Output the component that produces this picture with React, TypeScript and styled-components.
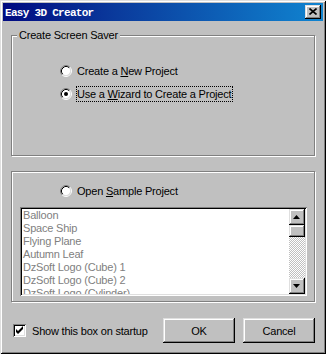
import React from 'react';
import styled, { createGlobalStyle } from 'styled-components';

const Global = createGlobalStyle`
  html, body { margin: 0; padding: 0; background: #c0c0c0; }
  body { font-family: "Liberation Sans", Arial, sans-serif; font-size: 11px; letter-spacing: -0.2px; color: #000; }
  * { box-sizing: border-box; }
`;

const Win = styled.div`
  width: 326px;
  height: 354px;
  background: #c0c0c0;
  padding: 3px;
  display: flex;
  flex-direction: column;
  box-shadow: inset 1px 1px 0 #dfdfdf, inset -1px -1px 0 #000, inset 2px 2px 0 #fff, inset -2px -2px 0 #808080;
`;

const TitleBar = styled.div`
  height: 18px;
  flex: none;
  display: flex;
  align-items: center;
  justify-content: space-between;
  padding: 0 2px 0 2px;
  background: linear-gradient(90deg, #000a80 0%, #0a3a9c 35%, #1084d0 100%);
`;

const Title = styled.span`
  color: #fff;
  font-family: "Liberation Mono", "DejaVu Sans Mono", monospace;
  font-weight: bold;
  font-size: 11px;
  letter-spacing: -0.7px;
  padding-top: 1px;
  white-space: nowrap;
`;

const RaisedBox = styled.div`
  background: #c0c0c0;
  display: flex;
  align-items: center;
  justify-content: center;
  box-shadow: inset -1px -1px 0 #000, inset 1px 1px 0 #dfdfdf, inset -2px -2px 0 #808080, inset 2px 2px 0 #fff;
`;

const CloseBtn = styled(RaisedBox)`
  width: 16px;
  height: 14px;
  padding: 0 1px 1px 0;
`;

const Body = styled.div`
  flex: 1;
  display: flex;
  flex-direction: column;
  padding: 0 8px;
`;

const Group = styled.div<{ $h: number; $mt: number }>`
  position: relative;
  flex: none;
  height: ${p => p.$h}px;
  margin-top: ${p => p.$mt}px;
  border: 1px solid #808080;
  box-shadow: inset 1px 1px 0 #fff, 1px 1px 0 #fff;
  display: flex;
  flex-direction: column;
`;

const GroupLabel = styled.span`
  position: absolute;
  top: -7px;
  left: 5px;
  padding: 0 2px;
  background: #c0c0c0;
  line-height: 13px;
  white-space: nowrap;
`;

const Options = styled.div<{ $pt: number }>`
  display: flex;
  flex-direction: column;
  gap: 7px;
  padding: ${p => p.$pt}px 0 0 48px;
`;

const OptionRow = styled.div`
  display: flex;
  align-items: center;
  height: 16px;
`;

const OptionLabel = styled.span<{ $focused?: boolean }>`
  margin-left: 4px;
  border: 1px dotted ${p => (p.$focused ? '#000' : 'transparent')};
  padding: 0 1px 0 0;
  line-height: 14px;
  white-space: nowrap;
`;

const Key = styled.span`
  text-decoration: underline;
`;

const RadioSvg = styled.svg`
  flex: none;
  display: block;
`;

function Radio({ checked }: { checked?: boolean }) {
  return (
    <RadioSvg width="12" height="12" viewBox="0 0 12 12">
      <circle cx="6" cy="6" r="4.5" fill="#fff" />
      <path d="M2.11 9.89 A5.5 5.5 0 0 1 9.89 2.11" fill="none" stroke="#808080" strokeWidth="1" />
      <path d="M9.89 2.11 A5.5 5.5 0 0 1 2.11 9.89" fill="none" stroke="#fff" strokeWidth="1" />
      <path d="M2.82 9.18 A4.5 4.5 0 0 1 9.18 2.82" fill="none" stroke="#000" strokeWidth="1" />
      <path d="M9.18 2.82 A4.5 4.5 0 0 1 2.82 9.18" fill="none" stroke="#dfdfdf" strokeWidth="1" />
      {checked && <circle cx="6" cy="6" r="2" fill="#000" />}
    </RadioSvg>
  );
}

const ListBox = styled.div`
  margin: 8px 7px 0 8px;
  height: 89px;
  flex: none;
  background: #fff;
  display: flex;
  padding: 2px;
  box-shadow: inset 1px 1px 0 #808080, inset -1px -1px 0 #fff, inset 2px 2px 0 #000, inset -2px -2px 0 #dfdfdf;
`;

const Items = styled.div`
  flex: 1;
  overflow: hidden;
  padding-left: 1px;
`;

const Item = styled.div`
  height: 13px;
  line-height: 13px;
  color: #808080;
  white-space: nowrap;
`;

const ScrollBar = styled.div`
  width: 16px;
  flex: none;
  display: flex;
  flex-direction: column;
`;

const ScrollBtn = styled(RaisedBox)`
  width: 16px;
  height: 16px;
  flex: none;
  padding: 0 1px 1px 0;
`;

const Thumb = styled(RaisedBox)`
  width: 16px;
  height: 12px;
  flex: none;
`;

const Track = styled.div`
  flex: 1;
  background-color: #fff;
  background-image: repeating-conic-gradient(#c0c0c0 0 25%, #fff 0 50%);
  background-size: 2px 2px;
`;

const Footer = styled.div`
  display: flex;
  align-items: center;
  margin-top: 16px;
  height: 25px;
  flex: none;
`;

const CheckBox = styled.div`
  width: 13px;
  height: 13px;
  margin-left: 2px;
  flex: none;
  background: #fff;
  display: flex;
  align-items: center;
  justify-content: center;
  box-shadow: inset 1px 1px 0 #808080, inset -1px -1px 0 #fff, inset 2px 2px 0 #000, inset -2px -2px 0 #dfdfdf;
`;

const CheckLabel = styled.span`
  margin-left: 6px;
  white-space: nowrap;
`;

const Button = styled(RaisedBox)<{ $first?: boolean }>`
  width: 72px;
  height: 25px;
  margin-left: ${p => (p.$first ? 'auto' : '8px')};
  font-size: 11px;
`;

const items = [
  'Balloon',
  'Space Ship',
  'Flying Plane',
  'Autumn Leaf',
  'DzSoft Logo (Cube) 1',
  'DzSoft Logo (Cube) 2',
  'DzSoft Logo (Cylinder)',
];

export default function App() {
  return (
    <>
      <Global />
      <Win>
        <TitleBar>
          <Title>Easy 3D Creator</Title>
          <CloseBtn>
            <svg width="8" height="7" viewBox="0 0 8 7">
              <path d="M0.5 0.5 L7.5 6.5 M7.5 0.5 L0.5 6.5" stroke="#000" strokeWidth="1.6" />
            </svg>
          </CloseBtn>
        </TitleBar>
        <Body>
          <Group $h={121} $mt={14}>
            <GroupLabel>Create Screen Saver</GroupLabel>
            <Options $pt={27}>
              <OptionRow>
                <Radio />
                <OptionLabel>
                  Create a <Key>N</Key>ew Project
                </OptionLabel>
              </OptionRow>
              <OptionRow>
                <Radio checked />
                <OptionLabel $focused>
                  Use a <Key>W</Key>izard to Create a Project
                </OptionLabel>
              </OptionRow>
            </Options>
          </Group>
          <Group $h={131} $mt={15}>
            <Options $pt={11}>
              <OptionRow>
                <Radio />
                <OptionLabel>
                  Open <Key>S</Key>ample Project
                </OptionLabel>
              </OptionRow>
            </Options>
            <ListBox>
              <Items>
                {items.map(it => (
                  <Item key={it}>{it}</Item>
                ))}
              </Items>
              <ScrollBar>
                <ScrollBtn>
                  <svg width="7" height="4" viewBox="0 0 7 4">
                    <polygon points="3.5,0 7,4 0,4" fill="#000" />
                  </svg>
                </ScrollBtn>
                <Thumb />
                <Track />
                <ScrollBtn>
                  <svg width="7" height="4" viewBox="0 0 7 4">
                    <polygon points="0,0 7,0 3.5,4" fill="#000" />
                  </svg>
                </ScrollBtn>
              </ScrollBar>
            </ListBox>
          </Group>
          <Footer>
            <CheckBox>
              <svg width="9" height="9" viewBox="0 0 9 9">
                <path d="M1 3 L3 5 L8 0 L8 3 L3 8 L1 6 Z" fill="#000" />
              </svg>
            </CheckBox>
            <CheckLabel>Show this box on startup</CheckLabel>
            <Button $first>OK</Button>
            <Button>Cancel</Button>
          </Footer>
        </Body>
      </Win>
    </>
  );
}
